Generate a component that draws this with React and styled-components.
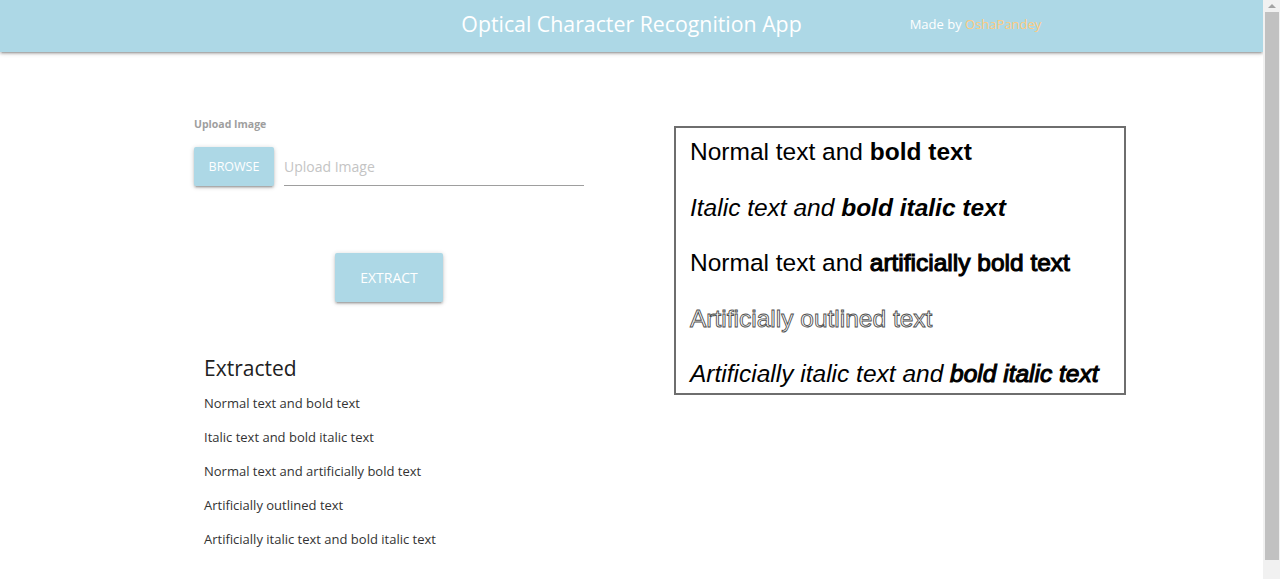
import React from 'react';
import styled, { createGlobalStyle } from 'styled-components';

const lines = [
  'Normal text and bold text',
  'Italic text and bold italic text',
  'Normal text and artificially bold text',
  'Artificially outlined text',
  'Artificially italic text and bold italic text',
];

export default function App() {
  return (
    <Window>
      <GlobalStyle />
      <Page>
        <Nav>
          <span />
          <Title>Optical Character Recognition App</Title>
          <Credit>
            Made by <Author>OshaPandey</Author>
          </Credit>
        </Nav>
        <Main>
          <LeftColumn>
            <FieldLabel>Upload Image</FieldLabel>
            <FileRow>
              <Button>Browse</Button>
              <PathInput placeholder="Upload Image" readOnly />
            </FileRow>
            <ExtractRow>
              <Button big>Extract</Button>
            </ExtractRow>
            <Results>
              <ResultsTitle>Extracted</ResultsTitle>
              {lines.map(line => (
                <ResultLine key={line}>{line}</ResultLine>
              ))}
            </Results>
          </LeftColumn>
          <Preview>
            <SampleLine>Normal text and <b>bold text</b></SampleLine>
            <SampleLine italic>Italic text and <b>bold italic text</b></SampleLine>
            <SampleLine>Normal text and <FakeBold>artificially bold text</FakeBold></SampleLine>
            <SampleLine outlined>Artificially outlined text</SampleLine>
            <SampleLine italic>Artificially italic text and <FakeBold>bold italic text</FakeBold></SampleLine>
          </Preview>
        </Main>
      </Page>
      <ScrollTrack>
        <ScrollArrow />
        <ScrollThumb />
      </ScrollTrack>
    </Window>
  );
}

const GlobalStyle = createGlobalStyle`
  html, body {
    margin: 0;
    padding: 0;
    background: #ffffff;
    font-family: "Open Sans", "Noto Sans", sans-serif;
    overflow: hidden;
  }
`

const Window = styled.div`
  display: flex;
  height: 579px;
`

const Page = styled.div`
  flex: 1;
  min-width: 0;
`

const ScrollTrack = styled.div`
  width: 17px;
  background: #f1f1f1;
  display: flex;
  flex-direction: column;
  align-items: center;
  padding: 4px 0 19px;
  box-sizing: border-box;
`

const ScrollArrow = styled.div`
  width: 0;
  height: 0;
  border-left: 4px solid transparent;
  border-right: 4px solid transparent;
  border-bottom: 4px solid #a3a3a3;
  margin-bottom: 4px;
`

const ScrollThumb = styled.div`
  flex: 1;
  width: 14px;
  background: #c1c1c1;
`

const Nav = styled.nav`
  display: grid;
  grid-template-columns: 1fr auto 1fr;
  align-items: center;
  height: 52px;
  background: #add8e6;
  box-shadow: 0 2px 2px rgba(0, 0, 0, 0.14), 0 3px 1px -2px rgba(0, 0, 0, 0.12), 0 1px 5px rgba(0, 0, 0, 0.2);
`

const Title = styled.h1`
  margin: 0 0 6px;
  font-weight: 400;
  font-size: 21.3px;
  color: #ffffff;
`

const Credit = styled.div`
  padding-left: 108px;
  font-size: 13px;
  color: #ffffff;
  margin-bottom: 5px;
`

const Author = styled.span`
  color: #ffcc80;
`

const Main = styled.main`
  display: flex;
  align-items: flex-start;
  padding: 65px 0 0 194px;
`

const LeftColumn = styled.div`
  width: 390px;
  display: flex;
  flex-direction: column;
`

const FieldLabel = styled.label`
  font-size: 10.5px;
  font-weight: 700;
  color: #9e9e9e;
`

const FileRow = styled.div`
  display: flex;
  align-items: flex-end;
  gap: 10px;
  margin-top: 15px;
`

const Button = styled.button`
  border: none;
  border-radius: 2px;
  background: #add8e6;
  color: #ffffff;
  font-family: inherit;
  text-transform: uppercase;
  font-size: ${p => (p.big ? '14px' : '12.5px')};
  width: ${p => (p.big ? '108px' : '80px')};
  height: ${p => (p.big ? '49px' : '39px')};
  padding: 0;
  box-shadow: 0 2px 2px rgba(0, 0, 0, 0.14), 0 3px 1px -2px rgba(0, 0, 0, 0.12), 0 1px 5px rgba(0, 0, 0, 0.2);
  cursor: pointer;
`

const PathInput = styled.input`
  flex: 1;
  height: 40px;
  border: none;
  border-bottom: 1px solid #9e9e9e;
  outline: none;
  padding: 2px 0 0;
  box-sizing: border-box;
  font-family: inherit;
  font-size: 14px;
  color: #333;
  &::placeholder {
    color: #c4c4c4;
  }
`

const ExtractRow = styled.div`
  display: flex;
  justify-content: center;
  margin-top: 67px;
`

const Results = styled.section`
  padding-left: 10px;
  margin-top: 52px;
`

const ResultsTitle = styled.h2`
  margin: 0 0 4px;
  font-size: 21px;
  font-weight: 400;
  color: #212121;
`

const ResultLine = styled.p`
  margin: 0;
  font-size: 13px;
  line-height: 34px;
  color: #333333;
`

const Preview = styled.div`
  margin: 9px 0 0 90px;
  width: 434px;
  height: 255px;
  padding: 10px 0 0 14px;
  border: 2px solid #6e6e6e;
  box-sizing: content-box;
  display: flex;
  flex-direction: column;
  gap: 27.5px;
  font-family: "Liberation Sans", Arial, sans-serif;
  color: #000000;
`

const SampleLine = styled.div`
  height: 28px;
  line-height: 28px;
  font-size: 24.5px;
  font-style: ${p => (p.italic ? 'italic' : 'normal')};
  color: ${p => (p.outlined ? '#ffffff' : '#000000')};
  -webkit-text-stroke: ${p => (p.outlined ? '0.9px #505050' : '0')};
  white-space: nowrap;
`

const FakeBold = styled.span`
  -webkit-text-stroke: 1.1px #000000;
`
